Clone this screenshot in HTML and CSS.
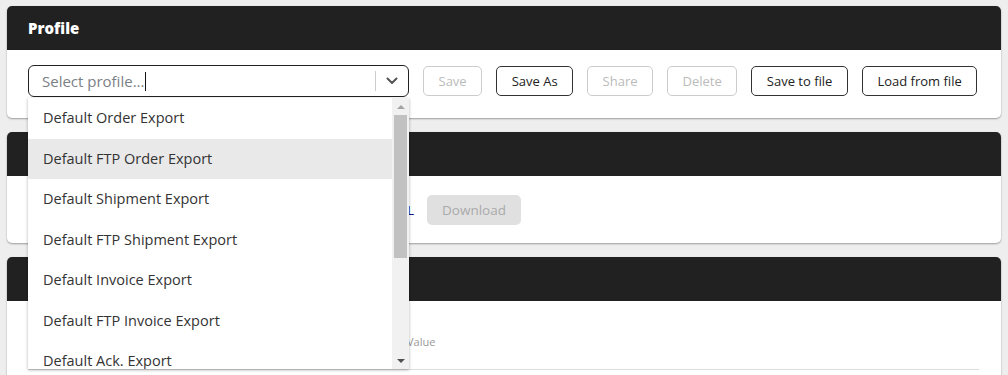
FILE: index.html
```html
<!DOCTYPE html>
<html lang="en">
<head>
  <meta charset="UTF-8" />
  <title>Export Profiles</title>
  <link rel="stylesheet" href="styles.css">
</head>
<body>

  <div class="card">
    <div class="card-header">Profile</div>
    <div class="card-body profile-row">
      <div class="select-wrap">
        <div class="select-box">
          <span class="placeholder">Select profile...</span><span class="caret"></span>
          <span class="select-sep"></span>
          <svg class="chevron" width="12" height="8" viewBox="0 0 12 8">
            <path d="M1.5 1.5 L6 6 L10.5 1.5" fill="none" stroke="#555" stroke-width="2" stroke-linecap="round" stroke-linejoin="round"/>
          </svg>
        </div>
        <div class="menu">
          <ul class="menu-list">
            <li>Default Order Export</li>
            <li class="active">Default FTP Order Export</li>
            <li>Default Shipment Export</li>
            <li>Default FTP Shipment Export</li>
            <li>Default Invoice Export</li>
            <li>Default FTP Invoice Export</li>
            <li>Default Ack. Export</li>
            <li>Default FTP Ack. Export</li>
            <li>Default Inventory Export</li>
            <li>Default FTP Inventory Export</li>
            <li>Default Product Export</li>
          </ul>
          <div class="scrollbar">
            <span class="arrow up"></span>
            <div class="thumb-track"><div class="thumb"></div></div>
            <span class="arrow down"></span>
          </div>
        </div>
      </div>
      <button class="btn" disabled>Save</button>
      <button class="btn">Save As</button>
      <button class="btn" disabled>Share</button>
      <button class="btn" disabled>Delete</button>
      <button class="btn">Save to file</button>
      <button class="btn">Load from file</button>
    </div>
  </div>

  <div class="card">
    <div class="card-header">Export</div>
    <div class="card-body export-row">
      <a class="export-link" href="#">Export file URL</a>
      <button class="btn-fill" disabled>Download</button>
    </div>
  </div>

  <div class="card">
    <div class="card-header">Parameters</div>
    <div class="card-body">
      <table class="params">
        <thead>
          <tr><th class="col-name">Name</th><th>Value</th></tr>
        </thead>
      </table>
    </div>
  </div>

</body>
</html>
```

FILE: styles.css
```css
body {
  font-family: "Open Sans", Arial, sans-serif;
  background-color: #eeeeee;
  color: #333;
  margin: 0;
  padding: 6px 7px;
}

.card {
  background: #fff;
  border-radius: 5px;
  box-shadow: 0 1px 2px rgba(0,0,0,0.35);
  margin-bottom: 14px;
}

.card-header {
  background-color: #212121;
  color: #fff;
  font-weight: 800;
  font-size: 15px;
  height: 44px;
  line-height: 44px;
  padding: 0 21px;
  border-radius: 5px 5px 0 0;
}

.card-body {
  padding: 15px 21px 21px;
}

.profile-row {
  display: flex;
  align-items: center;
  gap: 14px;
}

.select-wrap {
  position: relative;
  width: 381px;
  flex-shrink: 0;
}

.select-box {
  display: flex;
  align-items: center;
  height: 32px;
  box-sizing: border-box;
  border: 1px solid #222;
  border-radius: 6px;
  padding-left: 13px;
}

.placeholder {
  color: #7b7f86;
  font-size: 15px;
}

.caret {
  width: 1px;
  height: 19px;
  background: #111;
  margin-left: 1px;
}

.select-sep {
  width: 1px;
  height: 20px;
  background: #ccc;
  margin-left: auto;
}

.chevron {
  margin: 0 10px;
}

/* open dropdown */
.menu {
  position: absolute;
  top: 33px;
  left: 0;
  width: 381px;
  height: 271px;
  display: flex;
  background: #fff;
  box-shadow: 0 1px 3px rgba(0,0,0,0.3);
  z-index: 10;
}

.menu-list {
  flex: 1;
  margin: 0;
  padding: 0;
  list-style: none;
  overflow: hidden;
}

.menu-list li {
  height: 40.5px;
  line-height: 40.5px;
  padding-left: 15px;
  font-size: 14.5px;
  color: #333;
  white-space: nowrap;
}

.menu-list li.active {
  background-color: #e9e9e9;
}

.scrollbar {
  width: 17px;
  background: #f1f1f1;
  display: flex;
  flex-direction: column;
  align-items: center;
}

.arrow {
  height: 17px;
  width: 17px;
  display: flex;
  align-items: center;
  justify-content: center;
}

.arrow::before {
  content: "";
  border-left: 4px solid transparent;
  border-right: 4px solid transparent;
}

.arrow.up::before {
  border-bottom: 4px solid #a3a3a3;
}

.arrow.down::before {
  border-top: 4px solid #505050;
}

.thumb-track {
  flex: 1;
  width: 13px;
}

.thumb {
  height: 143px;
  background: #c1c1c1;
}

.btn {
  font-family: inherit;
  font-size: 13px;
  background: #fff;
  color: #222;
  border: 1px solid #333;
  border-radius: 5px;
  height: 30px;
  padding: 0 14.5px;
  white-space: nowrap;
  flex-shrink: 0;
}

.btn:disabled {
  color: #bbb;
  border-color: #ccc;
}

.export-row {
  display: flex;
  align-items: center;
  gap: 13px;
  padding-top: 19px;
  padding-bottom: 18px;
}

.export-link {
  width: 386px;
  text-align: right;
  color: #1a1a8a;
  font-size: 13px;
  text-decoration: none;
}

.btn-fill {
  font-family: inherit;
  font-size: 13.5px;
  background: #e0e0e0;
  color: #aaa;
  border: none;
  border-radius: 5px;
  height: 30px;
  width: 94px;
}

.params {
  width: 951px;
  border-collapse: collapse;
  margin-top: 18px;
}

.params th {
  text-align: left;
  font-weight: normal;
  font-size: 11px;
  color: #999;
  padding: 0 0 20px;
  border-bottom: 1px solid #ddd;
}

.params .col-name {
  width: 379px;
}
```
